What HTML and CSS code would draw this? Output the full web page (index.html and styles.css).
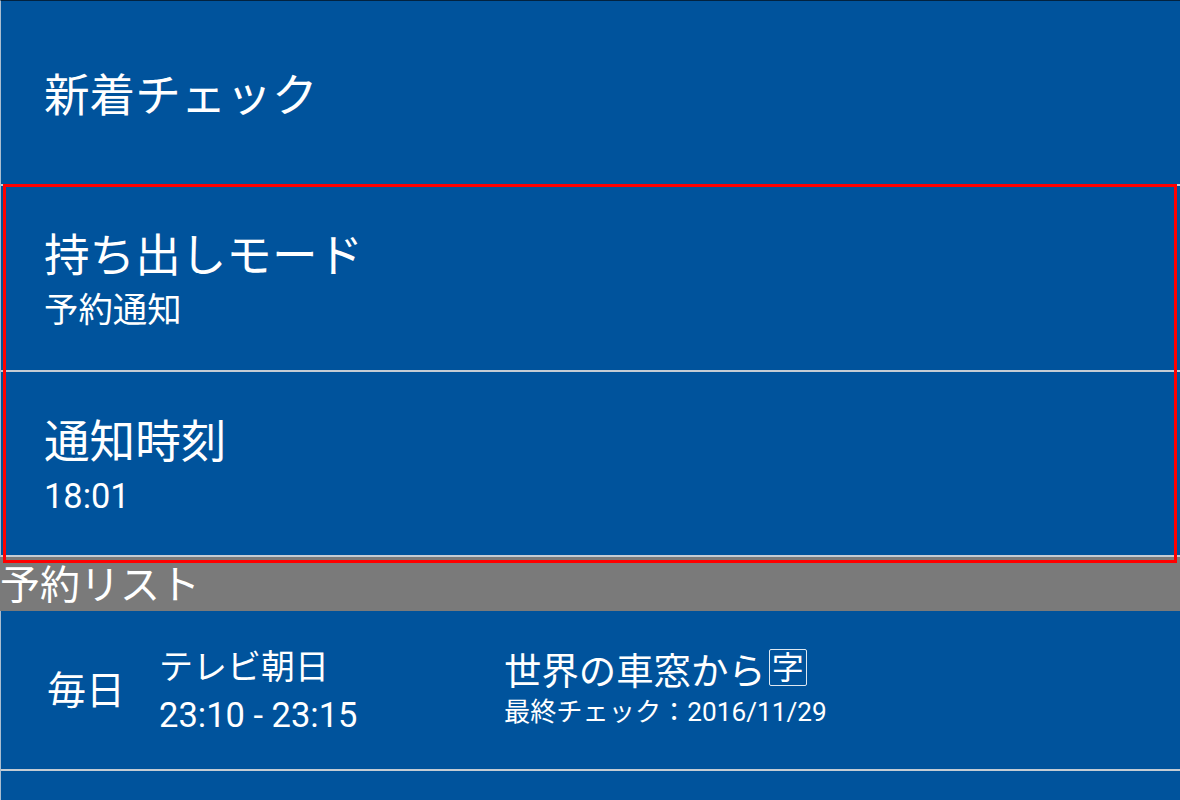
FILE: index.html
```html
<!DOCTYPE html>
<html lang="ja">

<head>
    <meta charset="UTF-8">
    <meta name="viewport" content="width=device-width, initial-scale=1.0">
    <title>新着チェック</title>
    <link rel="stylesheet" href="styles.css">
</head>

<body>
    <div class="screen">
        <div class="row row-single">
            <div class="title">新着チェック</div>
        </div>
        <div class="row">
            <div class="title">持ち出しモード</div>
            <div class="sub">予約通知</div>
        </div>
        <div class="row row-last">
            <div class="title">通知時刻</div>
            <div class="sub">18:01</div>
        </div>
        <div class="section">予約リスト</div>
        <div class="item">
            <div class="repeat">毎日</div>
            <div class="slot">
                <div class="channel">テレビ朝日</div>
                <div class="time">23:10 - 23:15</div>
            </div>
            <div class="program">
                <div class="program-name">世界の車窓から<span class="mark">字</span></div>
                <div class="checked">最終チェック：2016/11/29</div>
            </div>
        </div>
        <div class="highlight"></div>
    </div>
</body>

</html>
```

FILE: styles.css
```css
* {
    box-sizing: border-box;
}

html,
body {
    margin: 0;
    height: 100%;
    overflow: hidden;
}

.screen {
    position: relative;
    width: 1180px;
    height: 800px;
    background-color: #00539c;
    border-top: 1px solid #02223f;
    border-left: 1px solid #a9bdd0;
    color: white;
    font-family: Roboto, "Noto Sans CJK JP", sans-serif;
}

.row {
    height: 186px;
    padding: 40px 0 0 43px;
    border-bottom: 2px solid #c4ccd4;
}

.row-single {
    height: 185px;
    padding-top: 65px;
}

.row-last {
    height: 185px;
}

.title {
    font-size: 45.6px;
    line-height: 62px;
}

.sub {
    font-size: 34.4px;
    line-height: 45px;
}

.section {
    height: 54px;
    margin-left: -1px;
    background-color: #7a7a7a;
    font-size: 40px;
    line-height: 58px;
}

.item {
    display: flex;
    height: 160px;
    border-bottom: 2px solid #c4ccd4;
}

.repeat {
    width: 158px;
    padding: 55px 0 0 46px;
    font-size: 39px;
    line-height: 50px;
}

.slot {
    width: 345px;
    padding-top: 32px;
}

.channel {
    font-size: 34px;
    line-height: 48px;
}

.time {
    font-size: 34.5px;
    line-height: 48px;
}

.program {
    padding-top: 36px;
}

.program-name {
    display: flex;
    align-items: center;
    font-size: 37.4px;
    line-height: 50px;
}

.mark {
    display: flex;
    align-items: center;
    justify-content: center;
    width: 38px;
    height: 37px;
    margin: 0 0 9px 3px;
    border: 1.5px solid #dfe8f1;
    border-radius: 2px;
    font-size: 32px;
    line-height: 1;
}

.checked {
    font-size: 26.2px;
    line-height: 30px;
}

.highlight {
    position: absolute;
    left: 2px;
    top: 183px;
    width: 1174px;
    height: 379px;
    border: 3px solid #f00;
}
```
